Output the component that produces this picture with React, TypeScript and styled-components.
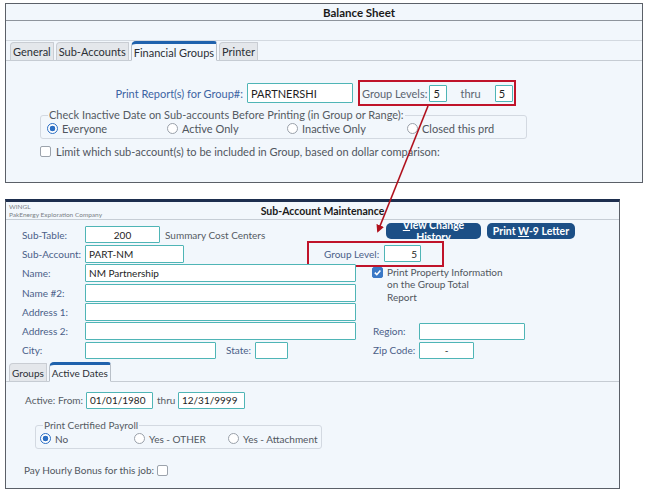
import React from "react";
import styled, { createGlobalStyle } from "styled-components";

const GlobalStyle = createGlobalStyle`
  body {
    margin: 0;
    background: #ffffff;
    font-family: Lato, "Open Sans", sans-serif;
    font-size: 11px;
    color: #4a4f57;
  }
`;

const Page = styled.div`
  position: relative;
  width: 647px;
  height: 491px;
  padding: 3px 0 0 5px;
  box-sizing: border-box;
`;

const Window = styled.div<{ $w: number; $h: number; $navy?: boolean; $fs: number }>`
  width: ${(p) => p.$w}px;
  height: ${(p) => p.$h}px;
  margin-bottom: 16px;
  box-sizing: border-box;
  background: #f2f7fc;
  border: 1px solid #5b6068;
  border-top: ${(p) => (p.$navy ? "3px solid #1d2e4e" : "1px solid #5b6068")};
  font-size: ${(p) => p.$fs}px;
  display: flex;
  flex-direction: column;
  overflow: hidden;
`;

const TitleBar = styled.div`
  height: 16px;
  border-bottom: 1px solid #8e949c;
  display: flex;
  align-items: center;
  justify-content: center;
  padding-left: 70px;
  font-weight: 700;
  font-size: 11.5px;
  color: #1a1a1a;
`;

const Band = styled.div`
  height: 19px;
  border-bottom: 1px solid #d3d9e0;
`;

const TabStrip = styled.div<{ $pad: number }>`
  height: 19px;
  display: flex;
  align-items: flex-end;
  gap: 2px;
  padding-left: ${(p) => p.$pad}px;
  border-bottom: 1px solid #c6ccd3;
`;

const Tab = styled.div<{ $active?: boolean }>`
  height: ${(p) => (p.$active ? 16 : 17)}px;
  padding: 0 2px;
  display: flex;
  align-items: center;
  margin-bottom: -1px;
  color: #2b2f35;
  background: ${(p) => (p.$active ? "#f2f7fc" : "#e4e7eb")};
  border: 1px solid ${(p) => (p.$active ? "#b9c0c8" : "#c9cdd3")};
  border-top: ${(p) => (p.$active ? "3px solid #1f62ad" : "1px solid #c9cdd3")};
  border-bottom: ${(p) => (p.$active ? "1px solid #f2f7fc" : "1px solid #c6ccd3")};
  border-radius: ${(p) => (p.$active ? "5px 3px 0 0" : "4px 1px 0 0")};
`;

const Row = styled.div<{ $h?: number; $mt?: number }>`
  display: flex;
  align-items: center;
  height: ${(p) => p.$h ?? 19.3}px;
  margin-top: ${(p) => p.$mt ?? 0}px;
`;

const Label = styled.span<{ $w?: number; $right?: boolean; $color?: string; $ml?: number }>`
  display: inline-block;
  ${(p) => (p.$w ? `width: ${p.$w}px; flex: none;` : "")}
  ${(p) => (p.$right ? "text-align: right; padding-right: 4px; box-sizing: border-box;" : "")}
  margin-left: ${(p) => p.$ml ?? 0}px;
  color: ${(p) => p.$color ?? "#4a6088"};
  white-space: nowrap;
`;

const Field = styled.div<{ $w: number; $h?: number; $align?: string; $ml?: number }>`
  width: ${(p) => p.$w}px;
  height: ${(p) => p.$h ?? 17}px;
  margin-left: ${(p) => p.$ml ?? 0}px;
  flex: none;
  box-sizing: border-box;
  background: #ffffff;
  border: 1.5px solid #4fb5b6;
  border-radius: 1px;
  display: flex;
  align-items: center;
  justify-content: ${(p) => p.$align ?? "flex-start"};
  padding: 0 3px;
  color: #1e1e1e;
  white-space: nowrap;
  overflow: hidden;
`;

const Callout = styled.div<{ $w: number; $ml: number; $pl: number }>`
  width: ${(p) => p.$w}px;
  height: 26px;
  margin: -4px 0 -4px ${(p) => p.$ml}px;
  box-sizing: border-box;
  flex: none;
  border: 2px solid #c0142a;
  display: flex;
  align-items: center;
  padding-left: ${(p) => p.$pl}px;
`;

const Group = styled.fieldset<{ $w: number; $ml: number; $mt: number; $pl: number }>`
  width: ${(p) => p.$w}px;
  margin: ${(p) => p.$mt}px 0 0 ${(p) => p.$ml}px;
  padding: 0 0 2px ${(p) => p.$pl}px;
  box-sizing: border-box;
  border: 1px solid #d3d9e1;
  border-radius: 3px;
  min-width: 0;
`;

const Legend = styled.legend<{ $ml: number }>`
  padding: 0 1px;
  margin-left: ${(p) => p.$ml}px;
  color: #555b63;
  line-height: 12px;
`;

const RadioRow = styled.div<{ $step: number }>`
  display: grid;
  grid-template-columns: repeat(4, ${(p) => p.$step}px);
  height: 15px;
  align-items: center;
`;

const RadioItem = styled.label`
  display: flex;
  align-items: center;
  gap: 4px;
  color: #50565e;
  white-space: nowrap;
`;

const RadioDot = styled.span<{ $on?: boolean }>`
  width: 11px;
  height: 11px;
  box-sizing: border-box;
  border-radius: 50%;
  border: 1px solid ${(p) => (p.$on ? "#2c6fc4" : "#9aa1aa")};
  background: ${(p) => (p.$on ? "radial-gradient(circle, #2c6fc4 0 2.6px, #fff 3.1px)" : "#fff")};
  flex: none;
`;

const Check = styled.span<{ $on?: boolean }>`
  width: 11px;
  height: 11px;
  box-sizing: border-box;
  border-radius: 2px;
  border: 1px solid ${(p) => (p.$on ? "#3a78c6" : "#9ca3ac")};
  background: ${(p) => (p.$on ? "#3a78c6" : "#fff")};
  flex: none;
  display: flex;
  align-items: center;
  justify-content: center;
`;

const CheckLine = styled.div<{ $ml: number; $mt: number; $gap?: number }>`
  display: flex;
  align-items: center;
  gap: ${(p) => p.$gap ?? 5}px;
  margin: ${(p) => p.$mt}px 0 0 ${(p) => p.$ml}px;
  color: #50565e;
`;

/* bottom window */

const Header = styled.div`
  height: 17px;
  border-bottom: 1px solid #c6cdd5;
  display: grid;
  grid-template-columns: 1fr auto 1fr;
  align-items: center;
  padding: 0 3px;
`;

const Company = styled.div`
  font-size: 6.5px;
  line-height: 8px;
  color: #7a7f86;
  white-space: nowrap;
`;

const HeadTitle = styled.div`
  font-weight: 700;
  font-size: 10.5px;
  color: #1a1a1a;
  padding-left: 20px;
`;

const Form = styled.div`
  padding: 5px 0 2px 16px;
`;

const Buttons = styled.div`
  display: flex;
  gap: 6px;
  margin-left: auto;
  margin-right: 44px;
  align-self: flex-start;
  margin-top: -2px;
`;

const ActionButton = styled.div<{ $w: number; $wrap?: boolean }>`
  width: ${(p) => p.$w}px;
  height: 16px;
  box-sizing: border-box;
  padding: 0 ${(p) => (p.$wrap ? 12 : 2)}px;
  background: #1c4f86;
  border-radius: 5px;
  color: #ffffff;
  font-weight: 700;
  font-size: 10.5px;
  line-height: 12px;
  text-align: center;
  white-space: ${(p) => (p.$wrap ? "normal" : "nowrap")};
  display: flex;
  align-items: center;
  justify-content: center;
  overflow: hidden;
  u {
    text-decoration: underline;
  }
`;

const Grid = styled.div`
  display: grid;
  grid-template-columns: 338px 1fr;
  grid-auto-rows: 19.3px;
`;

const Cell = styled.div<{ $pl?: number }>`
  display: flex;
  align-items: center;
  padding-left: ${(p) => p.$pl ?? 0}px;
`;

const PropBlock = styled.div`
  grid-row: span 3;
  display: flex;
  align-items: flex-start;
  gap: 4px;
  padding: 3px 0 0 12px;
`;

const PropText = styled.div`
  line-height: 12.5px;
  margin-top: -1px;
  color: #50565e;
  white-space: nowrap;
`;

const Panel = styled.div`
  padding-top: 9px;
`;

const Overlay = styled.svg`
  position: absolute;
  left: 0;
  top: 0;
  pointer-events: none;
`;

const Tick = () => (
  <svg width="9" height="9" viewBox="0 0 10 10">
    <path d="M2 5.2 L4.2 7.4 L8.2 2.8" fill="none" stroke="#fff" strokeWidth="1.8" />
  </svg>
);

const Radio = ({ on, children }: { on?: boolean; children: React.ReactNode }) => (
  <RadioItem>
    <RadioDot $on={on} />
    {children}
  </RadioItem>
);

export default function App() {
  return (
    <>
      <GlobalStyle />
      <Page>
        <Window $w={638} $h={180} $fs={11}>
          <TitleBar>Balance Sheet</TitleBar>
          <Band />
          <TabStrip $pad={4}>
            <Tab>General</Tab>
            <Tab>Sub-Accounts</Tab>
            <Tab $active>Financial Groups</Tab>
            <Tab>Printer</Tab>
          </TabStrip>
          <Row $h={26} $mt={19}>
            <Label $w={241} $right $color="#3d64a3">
              Print Report(s) for Group#:
            </Label>
            <Field $w={106} $h={20}>
              PARTNERSHI
            </Field>
            <Callout $w={158} $ml={5} $pl={2}>
              <Label $color="#5a6470">Group Levels:</Label>
              <Field $w={18} $ml={2}>
                5
              </Field>
              <Label $color="#5a6470" $ml={13}>
                thru
              </Label>
              <Field $w={18} $ml={14}>
                5
              </Field>
            </Callout>
          </Row>
          <Group $w={487} $ml={34} $mt={3} $pl={6}>
            <Legend $ml={1}>Check Inactive Date on Sub-accounts Before Printing (in Group or Range):</Legend>
            <RadioRow $step={120}>
              <Radio on>Everyone</Radio>
              <Radio>Active Only</Radio>
              <Radio>Inactive Only</Radio>
              <Radio>Closed this prd</Radio>
            </RadioRow>
          </Group>
          <CheckLine $ml={34} $mt={6}>
            <Check />
            Limit which sub-account(s) to be included in Group, based on dollar comparison:
          </CheckLine>
        </Window>

        <Window $w={615} $h={290} $navy $fs={10}>
          <Header>
            <Company>
              WINGL
              <br />
              PakEnergy Exploration Company
            </Company>
            <HeadTitle>Sub-Account Maintenance</HeadTitle>
            <span />
          </Header>
          <Form>
            <Row>
              <Label $w={63}>Sub-Table:</Label>
              <Field $w={75} $align="center">
                200
              </Field>
              <Label $color="#555b63" $ml={5}>
                Summary Cost Centers
              </Label>
              <Buttons>
                <ActionButton $w={95} $wrap>
                  <span>
                    <u>V</u>iew Change History
                  </span>
                </ActionButton>
                <ActionButton $w={88}>
                  <span>
                    Print <u>W</u>-9 Letter
                  </span>
                </ActionButton>
              </Buttons>
            </Row>
            <Row>
              <Label $w={63}>Sub-Account:</Label>
              <Field $w={99} $h={18}>
                PART-NM
              </Field>
              <Callout $w={137} $ml={123} $pl={15}>
                <Label>Group Level:</Label>
                <Field $w={37} $ml={5} $align="flex-end">
                  5
                </Field>
              </Callout>
            </Row>
            <Grid>
              <Cell>
                <Label $w={63}>Name:</Label>
                <Field $w={271} $h={18}>
                  NM Partnership
                </Field>
              </Cell>
              <PropBlock>
                <Check $on>
                  <Tick />
                </Check>
                <PropText>
                  Print Property Information
                  <br />
                  on the Group Total
                  <br />
                  Report
                </PropText>
              </PropBlock>
              <Cell>
                <Label $w={63}>Name #2:</Label>
                <Field $w={271} $h={18} />
              </Cell>
              <Cell>
                <Label $w={63}>Address 1:</Label>
                <Field $w={271} $h={18} />
              </Cell>
              <Cell>
                <Label $w={63}>Address 2:</Label>
                <Field $w={271} $h={18} />
              </Cell>
              <Cell $pl={13}>
                <Label $w={46}>Region:</Label>
                <Field $w={106} />
              </Cell>
              <Cell>
                <Label $w={63}>City:</Label>
                <Field $w={131} />
                <Label $ml={10} $w={29}>
                  State:
                </Label>
                <Field $w={33} />
              </Cell>
              <Cell $pl={13}>
                <Label $w={46}>Zip Code:</Label>
                <Field $w={55} $align="center">
                  -
                </Field>
              </Cell>
            </Grid>
          </Form>
          <TabStrip $pad={3}>
            <Tab>Groups</Tab>
            <Tab $active>Active Dates</Tab>
          </TabStrip>
          <Panel>
            <Row $h={18}>
              <Label $color="#555b63" $ml={19} $w={33}>
                Active:
              </Label>
              <Label $color="#555b63" $w={28}>
                From:
              </Label>
              <Field $w={67}>01/01/1980</Field>
              <Label $color="#555b63" $ml={4} $w={21}>
                thru
              </Label>
              <Field $w={67}>12/31/9999</Field>
            </Row>
            <Group $w={287} $ml={29} $mt={10} $pl={4}>
              <Legend $ml={3}>Print Certified Payroll</Legend>
              <RadioRow $step={94}>
                <Radio on>No</Radio>
                <Radio>Yes - OTHER</Radio>
                <Radio>Yes - Attachment</Radio>
              </RadioRow>
            </Group>
            <CheckLine $ml={18} $mt={15} $gap={3}>
              Pay Hourly Bonus for this job:
              <Check />
            </CheckLine>
          </Panel>
        </Window>

        <Overlay width="647" height="491" viewBox="0 0 647 491">
          <defs>
            <marker id="head" markerWidth="8" markerHeight="8" refX="6" refY="4" orient="auto" markerUnits="userSpaceOnUse">
              <path d="M0 0 L8 4 L0 8 Z" fill="#b0101c" />
            </marker>
          </defs>
          <line x1="428" y1="106" x2="378" y2="231" stroke="#b0101c" strokeWidth="1.6" markerEnd="url(#head)" />
        </Overlay>
      </Page>
    </>
  );
}
